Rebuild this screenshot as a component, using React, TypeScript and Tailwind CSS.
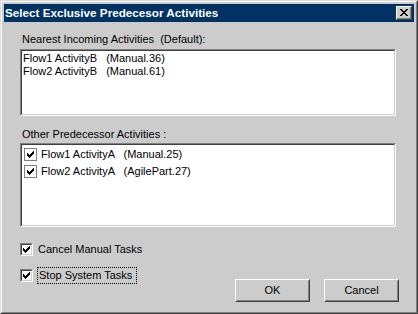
import React from "react";

const font = { fontFamily: '"Liberation Sans", Arial, sans-serif' };

function Check() {
  const px = [
    [6, 0], [5, 1], [6, 1], [0, 2], [4, 2], [5, 2], [6, 2],
    [0, 3], [1, 3], [3, 3], [4, 3], [5, 3],
    [0, 4], [1, 4], [2, 4], [3, 4], [4, 4],
    [1, 5], [2, 5], [3, 5], [2, 6],
  ];
  return (
    <svg width="7" height="7" viewBox="0 0 7 7" shapeRendering="crispEdges">
      {px.map(([x, y]) => (
        <rect key={`${x}-${y}`} x={x} y={y} width="1" height="1" fill="#000" />
      ))}
    </svg>
  );
}

function Box3d() {
  return (
    <div className="w-[13px] h-[13px] border border-t-[#808080] border-l-[#808080] border-r-white border-b-white shrink-0">
      <div className="w-full h-full border border-t-[#404040] border-l-[#404040] border-r-[#d4d0c8] border-b-[#d4d0c8] bg-white flex items-center justify-center">
        <Check />
      </div>
    </div>
  );
}

function FlatBox() {
  return (
    <div className="w-[13px] h-[13px] border border-[#808080] bg-white flex items-center justify-center shrink-0">
      <Check />
    </div>
  );
}

function Sunken({ className, children }: { className: string; children?: React.ReactNode }) {
  return (
    <div className={`border border-t-[#808080] border-l-[#808080] border-r-white border-b-white ${className}`}>
      <div className="w-full h-full border border-t-[#404040] border-l-[#404040] border-r-[#cccccc] border-b-[#cccccc] bg-white">
        {children}
      </div>
    </div>
  );
}

function Button({ label }: { label: string }) {
  return (
    <div className="w-[75px] h-[23px] border border-t-white border-l-white border-r-[#404040] border-b-[#404040]">
      <div className="w-full h-full border border-t-[#cccccc] border-l-[#cccccc] border-r-[#808080] border-b-[#808080] flex items-center justify-center text-[11px] text-black">
        {label}
      </div>
    </div>
  );
}

export default function App() {
  return (
    <div
      className="w-[418px] h-[314px] bg-[#cccccc] border border-t-[#dcdcdc] border-l-[#dcdcdc] border-r-[#404040] border-b-[#404040] text-black"
      style={font}
    >
      <div className="h-full border border-t-white border-l-white border-r-[#808080] border-b-[#808080] p-[2px] flex flex-col">
        <div className="h-[18px] bg-[#003264] flex items-center justify-between pl-[1px] pr-[2px]">
          <span className="text-white font-bold text-[11.7px] leading-none">
            Select Exclusive Predecesor Activities
          </span>
          <div className="w-[16px] h-[14px] border border-t-white border-l-white border-r-[#404040] border-b-[#404040] bg-[#cccccc]">
            <div className="w-full h-full border-r border-b border-[#808080] flex items-center justify-center">
              <svg width="8" height="7" viewBox="0 0 8 7" shapeRendering="crispEdges">
                <path d="M0 0h2l2 2.5 2-2.5h2L5 3.5 8 7H6L4 4.5 2 7H0l3-3.5z" fill="#000" />
              </svg>
            </div>
          </div>
        </div>

        <div className="pl-[16px] pr-[18px] text-[11px] flex flex-col">
          <div className="mt-[11px] h-[13px] leading-[13px] pl-[2px]">
            Nearest Incoming Activities&nbsp; (Default):
          </div>
          <Sunken className="mt-[3px] h-[67px]">
            <div className="pt-[1px] pl-[1px] leading-[13px] whitespace-pre">
              <div>Flow1 ActivityB   (Manual.36)</div>
              <div>Flow2 ActivityB   (Manual.61)</div>
            </div>
          </Sunken>

          <div className="mt-[12px] h-[13px] leading-[13px] pl-[2px]">
            Other Predecessor Activities :
          </div>
          <Sunken className="mt-[2px] h-[84px]">
            <div className="pt-[3px] pl-[2px] flex flex-col gap-[4px] whitespace-pre">
              <div className="flex items-center gap-[4px] h-[13px]">
                <FlatBox />
                <span>Flow1 ActivityA   (Manual.25)</span>
              </div>
              <div className="flex items-center gap-[4px] h-[13px]">
                <FlatBox />
                <span>Flow2 ActivityA   (AgilePart.27)</span>
              </div>
            </div>
          </Sunken>

          <div className="mt-[16px] h-[59px] flex justify-between">
            <div className="flex flex-col">
              <div className="flex items-center gap-[5px] h-[13px]">
                <Box3d />
                <span>Cancel Manual Tasks</span>
              </div>
              <div className="mt-[13px] flex items-center gap-[4px] h-[13px]">
                <Box3d />
                <span className="border border-dotted border-black px-[1px] h-[17px] leading-[15px] w-[100px]">
                  Stop System Tasks
                </span>
              </div>
            </div>
            <div className="flex items-end gap-[14px] mr-[-3px]">
              <Button label="OK" />
              <Button label="Cancel" />
            </div>
          </div>
        </div>
      </div>
    </div>
  );
}
